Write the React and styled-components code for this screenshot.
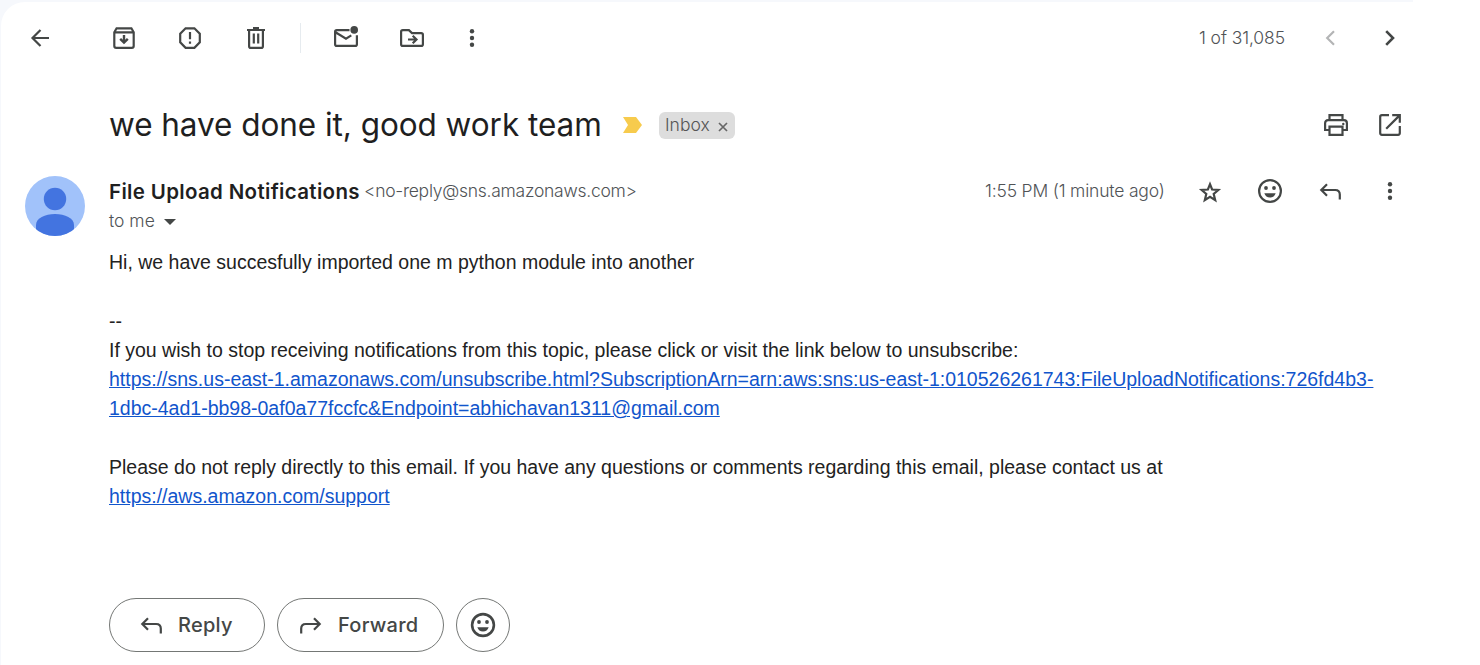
import React from 'react';
import styled, { createGlobalStyle } from 'styled-components';

const GlobalStyle = createGlobalStyle`
  * { box-sizing: border-box; }
  body { margin: 0; background: #fff; }
`;

const sans = `Inter, 'Open Sans', sans-serif`;

const Backdrop = styled.div`
  width: 1413px;
  height: 665px;
  padding: 2px 0 0 1px;
  background: #f6f8fc;
`;
const Panel = styled.main`
  height: 663px;
  padding-left: 24px;
  background: #fff;
  border-top-left-radius: 24px;
  overflow: hidden;
  font-family: ${sans};
  color: #505356;
`;
const Toolbar = styled.header`
  display: flex;
  align-items: center;
  height: 72px;
  padding-right: 8px;
`;
const IconButton = styled.button`
  display: flex;
  flex: none;
  width: 30px;
  height: 30px;
  margin: 0 0 0 ${(p) => p.$gap || 0}px;
  padding: 0;
  border: 0;
  background: none;
  color: ${(p) => (p.$muted ? '#b4b5b6' : '#444746')};
`;
const Glyph = styled.svg`
  display: block;
  flex: none;
  width: 30px;
  height: 30px;
  fill: none;
  stroke: currentColor;
  stroke-width: ${(p) => p.$weight || 2.2};
  overflow: visible;
`;
const Divider = styled.span`
  width: 1px;
  height: 30px;
  margin: 0 30px 0 29px;
  background: #e6ebef;
`;
const Spacer = styled.span`
  flex: 1;
`;
const Count = styled.span`
  width: 87px;
  margin-right: 29px;
  font-size: 17.5px;
  font-weight: 350;
  line-height: 22px;
  padding-bottom: 1px;
  letter-spacing: -0.1px;
  white-space: nowrap;
`;
const SubjectRow = styled.section`
  display: flex;
  align-items: center;
  height: 54px;
  margin-top: 24px;
  padding: 0 8px 0 84px;
`;
const Subject = styled.h1`
  width: 514px;
  margin: 0;
  font-size: 31.5px;
  font-weight: 370;
  line-height: 42px;
  letter-spacing: -0.05px;
  color: #1f1f1f;
  white-space: nowrap;
`;
const Marker = styled.svg`
  width: 19px;
  height: 16px;
  margin-right: 17px;
  fill: #f7cb4d;
`;
const Label = styled.span`
  display: flex;
  align-items: center;
  width: 76px;
  height: 27px;
  margin-top: 1px;
  padding: 0 7px 2px 6px;
  border-radius: 6px;
  background: #ddd;
  color: #555;
  font-size: 17.5px;
  font-weight: 350;
  letter-spacing: 0;
`;
const LabelClose = styled.svg`
  width: 10px;
  height: 10px;
  margin: 4px 0 0 auto;
  stroke: #666;
  stroke-width: 1.7;
`;
const Message = styled.article`
  display: flex;
  margin-top: 24px;
`;
const Avatar = styled.svg`
  flex: none;
  width: 60px;
  height: 60px;
  margin-right: 24px;
`;
const Content = styled.div`
  width: 1304px;
`;
const SenderRow = styled.div`
  display: flex;
  align-items: center;
  height: 30px;
  padding-right: 8px;
`;
const Sender = styled.strong`
  width: 255px;
  color: #1f1f1f;
  font-size: 20.5px;
  font-weight: 600;
  letter-spacing: 0.33px;
  white-space: nowrap;
`;
const Address = styled.span`
  padding-bottom: 2px;
  font-size: 17.5px;
  font-weight: 350;
  letter-spacing: -0.26px;
  white-space: nowrap;
`;
const Time = styled.span`
  width: 180px;
  margin-right: 30px;
  padding-bottom: 2px;
  font-size: 17.5px;
  font-weight: 350;
  letter-spacing: -0.18px;
  white-space: nowrap;
`;
const Recipient = styled.div`
  display: flex;
  align-items: center;
  height: 30px;
  padding-bottom: 1px;
  font-size: 17.5px;
  font-weight: 350;
`;
const Caret = styled.svg`
  width: 12px;
  height: 6px;
  margin: 2px 0 0 9px;
  fill: #444746;
`;
const MailBody = styled.div`
  width: 1293px;
  margin-top: 12px;
  color: #222;
  font: 19.5px/29.25px 'Liberation Sans', Arial, sans-serif;
`;
const Paragraph = styled.p`
  margin: 0 0 29.25px;
`;
const Link = styled.a`
  color: #1155cc;
  text-decoration: underline;
`;
const Actions = styled.footer`
  display: flex;
  gap: 12px;
  margin-top: 87px;
`;
const Pill = styled.button`
  display: flex;
  align-items: center;
  width: ${(p) => p.$width}px;
  height: 54px;
  padding: 0 0 0 ${(p) => p.$inset}px;
  gap: ${(p) => p.$gap || 0}px;
  border: 1px solid #747775;
  border-radius: 27px;
  background: #fff;
  color: #444746;
  font: 500 20px/30px ${sans};
  letter-spacing: 0.25px;
`;

const glyphs = {
  back: <path d="M24 15H7.5M15.5 7l-8 8 8 8" />,
  archive: (
    <>
      <path d="M5.3 9.2 7.6 5.3H22.4L24.7 9.2V23q0 1.9-1.9 1.9H7.2Q5.3 24.9 5.3 23ZM5.3 9.4H24.7" />
      <path d="M15 12v7M11.2 15.8l3.8 3.8 3.8-3.8" strokeWidth="2.4" />
    </>
  ),
  report: (
    <>
      <path d="M10.6 5.3H19.4L24.8 10.7V19.3L19.4 24.8H10.6L5.2 19.3V10.7Z" />
      <path d="M15 9v7.2M15 18.6v2.2" />
    </>
  ),
  trash: (
    <path d="M6 7H24M12 5.2h6M8.1 7V23.2q0 1.7 1.7 1.7H20.2q1.7 0 1.7-1.7V7M12.8 10.5v10M17.2 10.5v10" />
  ),
  unread: (
    <>
      <path d="M18.5 7.1H5.8Q4.1 7.1 4.1 8.8V21.2Q4.1 22.9 5.8 22.9H24.2Q25.9 22.9 25.9 21.2V12.2M4.5 9.2 15 15.6 20.3 12.4" />
      <circle cx="23.2" cy="6.9" r="3.8" fill="currentColor" stroke="none" />
    </>
  ),
  move: (
    <>
      <path d="M4.1 8.8Q4.1 7.1 5.8 7.1H11.9L15 10.1H24.2Q25.9 10.1 25.9 11.8V21.2Q25.9 22.9 24.2 22.9H5.8Q4.1 22.9 4.1 21.2Z" />
      <path d="M11 16.5h8M15.7 12.7l3.8 3.8-3.8 3.8" />
    </>
  ),
  more: (
    <g fill="currentColor" stroke="none">
      <circle cx="15" cy="8.3" r="2.2" />
      <circle cx="15" cy="15" r="2.2" />
      <circle cx="15" cy="21.7" r="2.2" />
    </g>
  ),
  prev: <path d="M19 8.2 12.2 15 19 21.8" />,
  next: <path d="M11.2 8.2 18 15 11.2 21.8" strokeWidth="2.6" />,
  print: (
    <>
      <path d="M8.5 10.2V5.2H21.5V10.2M8.5 20H4.1V13.2Q4.1 10.2 7.1 10.2H22.9Q25.9 10.2 25.9 13.2V20H21.5" />
      <path d="M8.5 16.7H21.5V24.8H8.5Z" />
      <circle cx="22.3" cy="14" r="1.2" fill="currentColor" stroke="none" />
    </>
  ),
  open: (
    <path d="M14 5.2H6.9Q5.2 5.2 5.2 6.9V23.1Q5.2 24.8 6.9 24.8H23.1Q24.8 24.8 24.8 23.1V16M17.2 5.2H24.8V12.8M24.6 5.4 11.2 18.8" />
  ),
  star: (
    <path
      d="M15 8.2 17.1 13.5 23.4 14 18.7 18 20.2 24.2 15 20.9 9.8 24.2 11.3 18 6.6 14 12.9 13.5Z"
      strokeWidth="2.2"
    />
  ),
  emoji: (
    <>
      <circle cx="15" cy="15" r="10.9" />
      <g fill="currentColor" stroke="none">
        <circle cx="11" cy="12" r="1.9" />
        <circle cx="19" cy="12" r="1.9" />
        <path d="M9.3 17.2H20.7Q19.3 21.4 15 21.4T9.3 17.2Z" />
      </g>
    </>
  ),
  reply: <path d="M12 8.3 6.3 14 12 19.7M6.5 14H20.2Q24.8 14 24.8 18.6V23.4" />,
  forward: <path d="M18 8.3 23.7 14 18 19.7M23.5 14H9.8Q5.2 14 5.2 18.6V23.4" />,
};

const Icon = ({ name, weight }) => (
  <Glyph viewBox="0 0 30 30" $weight={weight} aria-hidden="true">
    {glyphs[name]}
  </Glyph>
);

const Action = ({ name, gap, muted, label }) => (
  <IconButton $gap={gap} $muted={muted} aria-label={label}>
    <Icon name={name} />
  </IconButton>
);

export default function App() {
  return (
    <>
      <GlobalStyle />
      <Backdrop>
        <Panel>
          <Toolbar>
            <Action name="back" label="Back" />
            <Action name="archive" gap={54} label="Archive" />
            <Action name="report" gap={36} label="Report spam" />
            <Action name="trash" gap={36} label="Delete" />
            <Divider />
            <Action name="unread" label="Mark as unread" />
            <Action name="move" gap={36} label="Move to" />
            <Action name="more" gap={30} label="More" />
            <Spacer />
            <Count>1 of 31,085</Count>
            <Action name="prev" muted label="Newer" />
            <Action name="next" gap={30} label="Older" />
          </Toolbar>

          <SubjectRow>
            <Subject>we have done it, good work team</Subject>
            <Marker viewBox="0 0 19 16">
              <path d="M0 0H13L19 8 13 16H0L5 8Z" />
            </Marker>
            <Label>
              Inbox
              <LabelClose viewBox="0 0 10 10">
                <path d="M1 1 9 9M9 1 1 9" />
              </LabelClose>
            </Label>
            <Spacer />
            <Action name="print" label="Print" />
            <Action name="open" gap={24} label="Open in new window" />
          </SubjectRow>

          <Message>
            <Avatar viewBox="0 0 60 60">
              <clipPath id="disc">
                <circle cx="30" cy="30" r="30" />
              </clipPath>
              <circle cx="30" cy="30" r="30" fill="#a1c2fa" />
              <g clipPath="url(#disc)" fill="#4374e0">
                <circle cx="30" cy="23" r="11.2" />
                <path d="M11 62V49C11 42 20 38 30 38S49 42 49 49V62Z" />
              </g>
            </Avatar>
            <Content>
              <SenderRow>
                <Sender>File Upload Notifications</Sender>
                <Address>&lt;no-reply@sns.amazonaws.com&gt;</Address>
                <Spacer />
                <Time>1:55 PM (1 minute ago)</Time>
                <Action name="star" label="Star" />
                <Action name="emoji" gap={30} label="Add reaction" />
                <Action name="reply" gap={30} label="Reply" />
                <Action name="more" gap={30} label="More" />
              </SenderRow>
              <Recipient>
                to me
                <Caret viewBox="0 0 12 6">
                  <path d="M0 0H12L6 6Z" />
                </Caret>
              </Recipient>
              <MailBody>
                <Paragraph>Hi, we have succesfully imported one m python module into another</Paragraph>
                <Paragraph>
                  --
                  <br />
                  If you wish to stop receiving notifications from this topic, please click or visit the link below to
                  unsubscribe:
                  <br />
                  <Link>
                    https://sns.us-east-1.amazonaws.com/unsubscribe.html?SubscriptionArn=arn:aws:sns:us-east-1:010526261743:FileUploadNotifications:726fd4b3-1dbc-4ad1-bb98-0af0a77fccfc&amp;Endpoint=abhichavan1311@gmail.com
                  </Link>
                </Paragraph>
                <Paragraph>
                  Please do not reply directly to this email. If you have any questions or comments regarding this email,
                  please contact us at
                  <br />
                  <Link>https://aws.amazon.com/support</Link>
                </Paragraph>
              </MailBody>
              <Actions>
                <Pill $width={156} $inset={26} $gap={12}>
                  <Icon name="reply" />
                  Reply
                </Pill>
                <Pill $width={167} $inset={18} $gap={12}>
                  <Icon name="forward" />
                  Forward
                </Pill>
                <Pill $width={54} $inset={11} aria-label="Add reaction">
                  <Icon name="emoji" weight={2.6} />
                </Pill>
              </Actions>
            </Content>
          </Message>
        </Panel>
      </Backdrop>
    </>
  );
}
